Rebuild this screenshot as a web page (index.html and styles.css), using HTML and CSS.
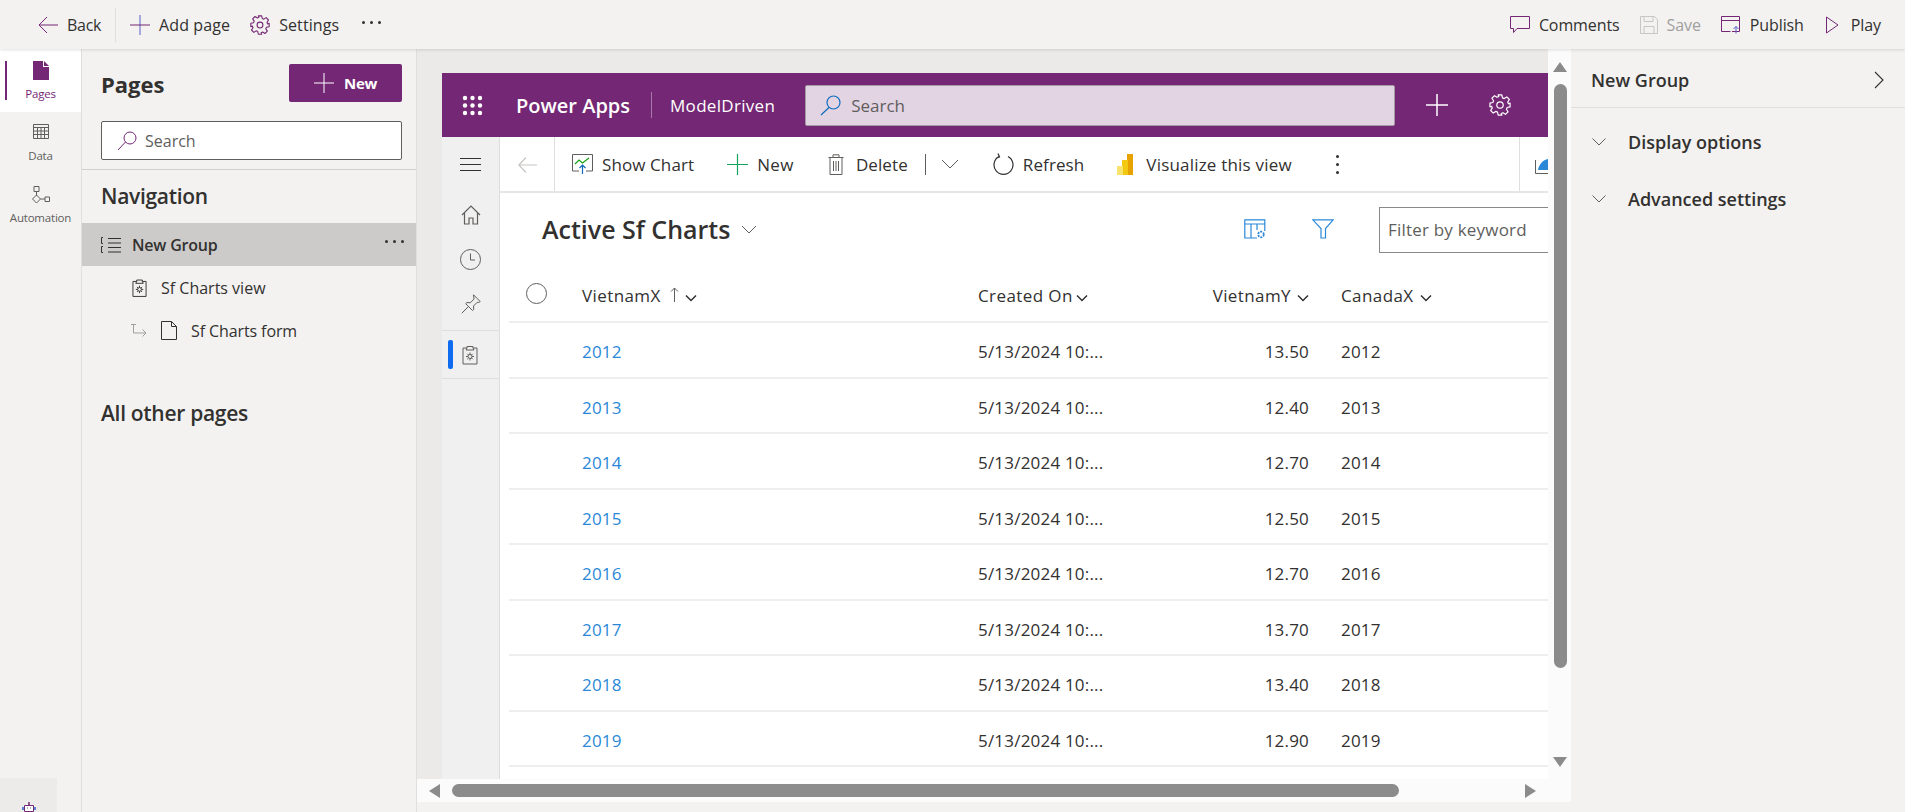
FILE: index.html
```html
<!DOCTYPE html>
<html lang="en">
<head>
    <meta charset="UTF-8">
    <title>Power Apps - ModelDriven</title>
    <link rel="stylesheet" href="styles.css">
</head>
<body>

<header class="topbar">
    <div class="topbar-left">
        <a class="cmd cmd-back"><svg width="20" height="18" viewBox="0 0 20 18"><path d="M9 1 1 9l8 8M1 9h19" class="ic-purple"/></svg>Back</a>
        <span class="top-sep"></span>
        <a class="cmd cmd-add"><svg width="20" height="20" viewBox="0 0 20 20"><path d="M10 0v20" class="ic-blue"/><path d="M0 10h20" class="ic-purple"/></svg>Add page</a>
        <a class="cmd cmd-settings"><svg width="20" height="20" viewBox="0 0 24 24"><use href="#gear"/></svg>Settings</a>
        <span class="top-dots"><i></i><i></i><i></i></span>
    </div>
    <div class="topbar-right">
        <a class="cmd"><svg width="20" height="18" viewBox="0 0 20 18"><path d="M.5.5h19v12H7l-3.500 4v-4h-3z" class="ic-purple"/></svg>Comments</a>
        <a class="cmd cmd-off"><svg width="18" height="18" viewBox="0 0 18 18"><path d="M.5.5h14l3 3v14H.5zM4 .5v5h9v-5M4 17.500v-7h10v7" fill="none" stroke="#c8c6c4"/></svg>Save</a>
        <a class="cmd"><svg width="20" height="18" viewBox="0 0 20 18"><path d="M.5.5h18v15H11M.5.500v15h9M.5 4.500h18" class="ic-purple"/><path d="M15 17.500v-7M12.500 13l2.500-2.500 2.500 2.500" class="ic-blue"/></svg>Publish</a>
        <a class="cmd cmd-play"><svg width="13" height="18" viewBox="0 0 13 18"><path d="M.5 1v16L12 9z" class="ic-purple"/></svg>Play</a>
    </div>
</header>

<svg class="defs" width="0" height="0">
    <symbol id="gear" viewBox="0 0 24 24">
        <circle cx="12" cy="12" r="3.500" fill="none" stroke="currentColor" stroke-width="1.300"/>
        <path d="M10 1h4l.7 3.200 1.900.8 2.800-1.800 2.800 2.800-1.800 2.800.8 1.900L23 10v4l-3.200.7-.8 1.900 1.800 2.800-2.800 2.800-2.800-1.800-1.900.8L14 23h-4l-.7-3.200-1.900-.8-2.800 1.800-2.800-2.800 1.800-2.800-.8-1.900L1 14v-4l3.200-.7.8-1.900-1.800-2.800 2.800-2.800 2.800 1.800 1.900-.8z" fill="none" stroke="currentColor" stroke-width="1.300" stroke-linejoin="round"/>
    </symbol>
    <symbol id="clipboard" viewBox="0 0 16 20">
        <path d="M5 3H1v16h14V3h-4M5 3V1.500h6V3l1 2H4z" fill="none" stroke="currentColor"/>
        <circle cx="8" cy="11.500" r="2" fill="none" stroke="currentColor"/>
        <path d="M8 7.500v2M8 13.500v2M4 11.500h2M10 11.500h2M5.300 8.800l1.200 1.200M9.500 13l1.200 1.200M5.300 14.200 6.500 13M9.500 10l1.200-1.200" stroke="currentColor"/>
    </symbol>
    <symbol id="chev" viewBox="0 0 12 8">
        <path d="M1 1.500 6 6.500l5-5" fill="none" stroke="currentColor" stroke-width="1.500"/>
    </symbol>
</svg>

<div class="main">
    <nav class="rail">
        <div class="rail-top">
            <a class="rail-item rail-active">
                <svg width="16" height="19" viewBox="0 0 16 19"><path d="M0 0h10v6h6v13H0z" fill="#742774"/><path d="M11 0l5 5h-5z" fill="#742774"/></svg>
                <span>Pages</span>
            </a>
            <a class="rail-item">
                <svg width="16" height="15" viewBox="0 0 16 15"><path d="M.5.500h15v14H.5zM.5 3.500h15M.5 7h15M.5 10.500h15M4.500 3.500v11M8 3.500v11M11.500 3.500v11" fill="none" stroke="#605e5c"/></svg>
                <span>Data</span>
            </a>
            <a class="rail-item rail-auto">
                <svg width="19" height="18" viewBox="0 0 19 18"><path d="M3 .5h5v5H3zM14 11h4.500v4.500H14zM5.500 5.500v4M5.500 9l4 4-4 4-4-4zM9.500 13H14" fill="none" stroke="#605e5c"/></svg>
                <span>Automation</span>
            </a>
        </div>
        <div class="rail-bot">
            <svg width="14" height="14" viewBox="0 0 14 14"><path d="M7 0v3" stroke="#742774" stroke-width="1.500"/><path d="M2.500 3.500h9v6h-9z" fill="#fff" stroke="#742774"/><path d="M1 5v3M13 5v3" stroke="#2b5fd9" stroke-width="1.500"/><path d="M5 6h1M8 6h1" stroke="#605e5c"/></svg>
        </div>
    </nav>

    <aside class="panel">
        <div class="panel-head">
            <h2>Pages</h2>
            <button class="btn-new"><svg width="20" height="20" viewBox="0 0 20 20"><path d="M10 0v20M0 10h20" stroke="#fff" fill="none"/></svg>New</button>
        </div>
        <div class="panel-search">
            <svg width="20" height="20" viewBox="0 0 20 20"><circle cx="13" cy="7" r="6" class="ic-purple"/><path d="M8.500 11 1 19" class="ic-purple"/></svg>
            <span>Search</span>
        </div>
        <h3 class="panel-sub">Navigation</h3>
        <div class="tree-group">
            <svg width="20" height="16" viewBox="0 0 20 16"><path d="M7 1.500h13M7 6h13M7 10.500h13M7 15h13" stroke="#323130"/><path d="M2 .5H.5v6H2M2 9.500H.5v6H2" stroke="#323130" fill="none"/></svg>
            <span class="tree-name">New Group</span>
            <span class="tree-dots"><i></i><i></i><i></i></span>
        </div>
        <div class="tree-item tree-view">
            <svg width="15" height="20" viewBox="0 0 16 20" color="#323130"><use href="#clipboard"/></svg>
            <span>Sf Charts view</span>
        </div>
        <div class="tree-item tree-form">
            <svg class="tree-arrow" width="16" height="13" viewBox="0 0 16 13"><path d="M0 .5h5M2.500.5V9H15M11.500 5.500 15 9l-3.500 3.500" stroke="#a19f9d" fill="none"/></svg>
            <svg width="16" height="19" viewBox="0 0 16 19"><path d="M.5.5h10l5 5v13H.5zM10.500.5v5h5" stroke="#323130" fill="none"/></svg>
            <span>Sf Charts form</span>
        </div>
        <h3 class="panel-other">All other pages</h3>
    </aside>

    <section class="canvas">
        <div class="canvas-row">
            <div class="app">
                <div class="app-head">
                    <svg class="waffle" width="21" height="21" viewBox="0 0 21 21" fill="#fff"><circle cx="3" cy="3" r="2.200"/><circle cx="10.500" cy="3" r="2.200"/><circle cx="18" cy="3" r="2.200"/><circle cx="3" cy="10.500" r="2.200"/><circle cx="10.500" cy="10.500" r="2.200"/><circle cx="18" cy="10.500" r="2.200"/><circle cx="3" cy="18" r="2.200"/><circle cx="10.500" cy="18" r="2.200"/><circle cx="18" cy="18" r="2.200"/></svg>
                    <span class="app-name">Power Apps</span>
                    <span class="app-sep"></span>
                    <span class="app-env">ModelDriven</span>
                    <div class="app-search">
                        <svg width="21" height="21" viewBox="0 0 21 21"><circle cx="13.500" cy="7.500" r="6.500" fill="none" stroke="#0f6cbd" stroke-width="1.200"/><path d="M9 12.500 1 20" stroke="#0f6cbd" stroke-width="1.200"/></svg>
                        <span>Search</span>
                    </div>
                    <svg class="app-plus" width="22" height="22" viewBox="0 0 22 22"><path d="M11 0v22M0 11h22" stroke="#fff" stroke-width="1.500"/></svg>
                    <svg class="app-gear" width="22" height="22" viewBox="0 0 24 24" color="#fff"><use href="#gear"/></svg>
                </div>
                <div class="app-body">
                    <div class="sitemap">
                        <div class="sm-burger"><i></i><i></i><i></i></div>
                        <div class="sm-links">
                            <svg width="20" height="20" viewBox="0 0 20 20"><path d="M1 10 10 1l9 9M3.500 8v11H8v-6h4v6h4.500V8" fill="none" stroke="#605e5c" stroke-width="1.200"/></svg>
                            <svg width="21" height="21" viewBox="0 0 21 21"><circle cx="10.500" cy="10.500" r="10" fill="none" stroke="#605e5c"/><path d="M10.500 4.500v6.500H15" fill="none" stroke="#605e5c"/></svg>
                            <svg width="20" height="20" viewBox="0 0 20 20"><path d="M12.500.8l6.700 6.700-1.500 1-1.500-.2-3.700 3.700.3 3.300-1.300 1.200L4.700 9.700 6 8.500l3.300.3L13 5.100l-.2-2zM7.500 12.500 .8 19.200" fill="none" stroke="#605e5c"/></svg>
                        </div>
                        <div class="sm-active">
                            <svg width="16" height="20" viewBox="0 0 16 20" color="#605e5c"><use href="#clipboard"/></svg>
                        </div>
                    </div>
                    <div class="content">
                        <div class="cmdbar">
                            <div class="cmd-backcell"><svg width="19" height="16" viewBox="0 0 19 16"><path d="M8 .5.8 8 8 15.500M.8 8H19" fill="none" stroke="#c8c6c4" stroke-width="1.200"/></svg></div>
                            <div class="cmd-items">
                                <a class="bar-item bar-chart">
                                    <svg width="21" height="20" viewBox="0 0 21 20"><path d="M7 17H.5V.5h20V17H14" fill="none" stroke="#605e5c"/><path d="M3 10l4-4 3.500 3L17 4" fill="none" stroke="#13a10e" stroke-width="1.200"/><path d="M10.500 20v-9M7.500 14l3-3 3 3" fill="none" stroke="#0f6cbd" stroke-width="1.200"/></svg>
                                    Show Chart
                                </a>
                                <a class="bar-item bar-new">
                                    <svg width="21" height="21" viewBox="0 0 21 21"><path d="M10.500 0v21M0 10.500h21" stroke="#13a35c" stroke-width="1.200"/></svg>
                                    New
                                </a>
                                <a class="bar-item bar-del">
                                    <svg width="16" height="21" viewBox="0 0 16 21"><path d="M.5 3.500h15M2 3.500V20.500h12V3.500M5 3.500V.8h6v2.700M5.500 7v10M8 7v10M10.500 7v10" fill="none" stroke="#605e5c"/></svg>
                                    Delete
                                </a>
                                <span class="bar-sep"></span>
                                <svg class="bar-more" width="18" height="10" viewBox="0 0 18 10"><path d="M1 1l8 8 8-8" fill="none" stroke="#605e5c"/></svg>
                                <a class="bar-item bar-refresh">
                                    <svg width="21" height="22" viewBox="0 0 21 22"><path d="M6 3.500a9.500 9.500 0 1 0 9 0M5 .5l1.500 3.500-3.500 1.200" fill="none" stroke="#323130" stroke-width="1.200"/></svg>
                                    Refresh
                                </a>
                                <a class="bar-item bar-pbi">
                                    <svg width="16" height="21" viewBox="0 0 16 21"><rect x="10" width="6" height="21" fill="#e8a200"/><rect x="5" y="6" width="6" height="15" fill="#f2c811"/><rect y="12" width="6" height="9" fill="#f8e36f"/></svg>
                                    Visualize this view
                                </a>
                                <span class="bar-dots"><i></i><i></i><i></i></span>
                            </div>
                            <div class="cmd-end"><svg width="13" height="16" viewBox="0 0 13 16"><path d="M.5 2v13.500H13" fill="none" stroke="#605e5c"/><path d="M3 12C4 6 8 2 13 1v11z" fill="#2b88d8"/></svg></div>
                        </div>
                        <div class="view-head">
                            <div class="view-title">Active Sf Charts<svg width="16" height="9" viewBox="0 0 16 9"><path d="M1 1l7 7 7-7" fill="none" stroke="#605e5c"/></svg></div>
                            <svg class="view-cols" width="22" height="20" viewBox="0 0 22 20"><path d="M13 19H.8V.8h20V12M.8 5h20M7 5v14M13 5v6" fill="none" stroke="#2b88d8" stroke-width="1.200"/><circle cx="17" cy="15.500" r="2.800" fill="none" stroke="#2b88d8" stroke-width="1.800" stroke-dasharray="2 1"/></svg>
                            <svg class="view-filter" width="22" height="20" viewBox="0 0 22 20"><path d="M.8.8h20.400L13.500 9.500V19h-4.500V9.500z" fill="none" stroke="#2b88d8" stroke-width="1.200"/></svg>
                            <div class="view-filterbox">Filter by keyword</div>
                        </div>
                        <div class="grid-head">
                            <span class="check"></span>
                            <span class="col-x">VietnamX<svg class="sort" width="9" height="15" viewBox="0 0 9 15"><path d="M4.500 15V1M1 4.500 4.500 1 8 4.500" fill="none" stroke="#605e5c"/></svg><svg class="cv" width="12" height="8"><use href="#chev"/></svg></span>
                            <span class="col-date">Created On<svg class="cv" width="12" height="8"><use href="#chev"/></svg></span>
                            <span class="col-y">VietnamY<svg class="cv" width="12" height="8"><use href="#chev"/></svg></span>
                            <span class="col-c">CanadaX<svg class="cv" width="12" height="8"><use href="#chev"/></svg></span>
                        </div>
                        <div class="grid-row"><a class="col-x">2012</a><span class="col-date">5/13/2024 10:...</span><span class="col-y">13.50</span><span class="col-c">2012</span></div>
                        <div class="grid-row"><a class="col-x">2013</a><span class="col-date">5/13/2024 10:...</span><span class="col-y">12.40</span><span class="col-c">2013</span></div>
                        <div class="grid-row"><a class="col-x">2014</a><span class="col-date">5/13/2024 10:...</span><span class="col-y">12.70</span><span class="col-c">2014</span></div>
                        <div class="grid-row"><a class="col-x">2015</a><span class="col-date">5/13/2024 10:...</span><span class="col-y">12.50</span><span class="col-c">2015</span></div>
                        <div class="grid-row"><a class="col-x">2016</a><span class="col-date">5/13/2024 10:...</span><span class="col-y">12.70</span><span class="col-c">2016</span></div>
                        <div class="grid-row"><a class="col-x">2017</a><span class="col-date">5/13/2024 10:...</span><span class="col-y">13.70</span><span class="col-c">2017</span></div>
                        <div class="grid-row"><a class="col-x">2018</a><span class="col-date">5/13/2024 10:...</span><span class="col-y">13.40</span><span class="col-c">2018</span></div>
                        <div class="grid-row"><a class="col-x">2019</a><span class="col-date">5/13/2024 10:...</span><span class="col-y">12.90</span><span class="col-c">2019</span></div>
                    </div>
                </div>
            </div>
            <div class="vscroll">
                <span class="arrow-up"></span>
                <span class="vthumb"></span>
                <span class="arrow-down"></span>
            </div>
        </div>
        <div class="hscroll">
            <span class="arrow-left"></span>
            <span class="hthumb"></span>
            <span class="arrow-right"></span>
        </div>
    </section>

    <aside class="props">
        <div class="props-head">
            <span>New Group</span>
            <svg width="10" height="18" viewBox="0 0 10 18"><path d="M1 1l8 8-8 8" fill="none" stroke="#323130" stroke-width="1.100"/></svg>
        </div>
        <div class="props-sec"><svg width="14" height="8" viewBox="0 0 14 8"><path d="M.5.5 7 7 13.500.5" fill="none" stroke="#605e5c"/></svg>Display options</div>
        <div class="props-sec"><svg width="14" height="8" viewBox="0 0 14 8"><path d="M.5.5 7 7 13.500.5" fill="none" stroke="#605e5c"/></svg>Advanced settings</div>
    </aside>
</div>

</body>
</html>
```

FILE: styles.css
```css
* {
    box-sizing: border-box;
}
html, body {
    height: 100%;
}
body {
    margin: 0;
    height: 812px;
    overflow: hidden;
    display: flex;
    flex-direction: column;
    font-family: "Open Sans", "Noto Sans", sans-serif;
    font-size: 16px;
    color: #323130;
    background: #f3f2f1;
}
.defs {
    position: absolute;
}
.ic-purple {
    fill: none;
    stroke: #742774;
}
.ic-blue {
    fill: none;
    stroke: #5b5fc7;
}

/* top bar */
.topbar {
    height: 49px;
    flex: none;
    display: flex;
    justify-content: space-between;
    align-items: center;
    background: #f3f2f1;
    box-shadow: 0 1px 3px rgba(0, 0, 0, 0.12);
    position: relative;
    z-index: 2;
}
.topbar-left, .topbar-right, .cmd {
    display: flex;
    align-items: center;
}
.topbar-left {
    padding-left: 38px;
}
.topbar-right {
    padding-right: 24px;
    gap: 20px;
}
.cmd {
    gap: 9px;
    letter-spacing: -0.1px;
}
.cmd-off {
    color: #a19f9d;
}
.cmd-back {
    gap: 9px;
    letter-spacing: -0.3px;
}
.cmd-play {
    gap: 12px;
    margin-left: 2px;
}
.top-sep {
    width: 1px;
    height: 34px;
    background: #e1dfdd;
    margin: 0 14px;
}
.cmd-add {
    letter-spacing: 0.1px;
}
.cmd-settings {
    margin-left: 20px;
    color: #323130;
    letter-spacing: 0.1px;
}
.cmd-settings svg {
    color: #742774;
}
.top-dots {
    display: flex;
    gap: 5px;
    margin-left: 23px;
    margin-top: -4px;
}
.top-dots i, .tree-dots i {
    width: 3px;
    height: 3px;
    border-radius: 50%;
    background: #323130;
}

.main {
    flex: 1;
    display: flex;
    min-height: 0;
}

/* left rail */
.rail {
    width: 82px;
    flex: none;
    border-right: 1px solid #e1dfdd;
    display: flex;
    flex-direction: column;
    justify-content: space-between;
}
.rail-top {
    display: flex;
    flex-direction: column;
}
.rail-item {
    height: 63px;
    padding-top: 12px;
    display: flex;
    flex-direction: column;
    align-items: center;
    gap: 6px;
    font-size: 11.5px;
    color: #605e5c;
    letter-spacing: -0.2px;
}
.rail-item + .rail-item {
    height: 62px;
    gap: 9px;
}
.rail-item.rail-auto {
    gap: 6px;
}
.rail-active {
    background: #fff;
    color: #742774;
    position: relative;
}
.rail-active::before {
    content: "";
    position: absolute;
    left: 5px;
    top: 12px;
    width: 2px;
    height: 39px;
    background: #742774;
}
.rail-bot {
    width: 57px;
    height: 34px;
    background: #edebe9;
    text-align: center;
    padding-top: 21px;
}

/* pages panel */
.panel {
    width: 335px;
    flex: none;
    border-right: 1px solid #e1dfdd;
}
.panel-head {
    display: flex;
    justify-content: space-between;
    align-items: center;
    padding: 15px 14px 0 19px;
}
.panel-head h2 {
    margin: 2px 0 0;
    font-size: 22px;
    font-weight: 700;
}
.btn-new {
    width: 113px;
    height: 38px;
    display: flex;
    align-items: center;
    justify-content: center;
    gap: 10px;
    border: 0;
    border-radius: 2px;
    background: #742774;
    color: #fff;
    font: 700 15px "Open Sans", sans-serif;
    letter-spacing: -0.3px;
}
.panel-search {
    margin: 19px 14px 0 19px;
    height: 39px;
    display: flex;
    align-items: center;
    gap: 8px;
    padding-left: 15px;
    background: #fff;
    border: 1px solid #605e5c;
    border-radius: 2px;
    color: #605e5c;
}
.panel-sub {
    margin: 9px 0 0;
    padding: 12px 19px 0;
    height: 54px;
    border-top: 1px solid #d2d0ce;
    font-size: 21px;
    font-weight: 600;
    letter-spacing: -0.3px;
}
.tree-group {
    height: 43px;
    display: flex;
    align-items: center;
    padding: 0 12px 0 19px;
    background: #cdcbc9;
}
.tree-name {
    flex: 1;
    margin-left: 11px;
    font-weight: 600;
    letter-spacing: -0.2px;
}
.tree-dots {
    display: flex;
    gap: 5px;
    margin-top: -6px;
}
.tree-item {
    height: 43px;
    display: flex;
    align-items: center;
}
.tree-view {
    padding-left: 50px;
    gap: 14px;
}
.tree-form {
    padding-left: 49px;
    gap: 14px;
    letter-spacing: -0.1px;
}
.panel-other {
    margin: 47px 0 0;
    padding-left: 19px;
    font-size: 21px;
    font-weight: 600;
    letter-spacing: -0.3px;
}

/* canvas */
.canvas {
    flex: 1;
    min-width: 0;
    display: flex;
    flex-direction: column;
}
.canvas-row {
    height: 730px;
    display: flex;
    padding-left: 25px;
    background: #ebeae8;
}
.app {
    flex: 1;
    min-width: 0;
    margin-top: 24px;
    display: flex;
    flex-direction: column;
    background: #fff;
    overflow: hidden;
}
.vscroll {
    width: 23px;
    flex: none;
    background: #fbfbfb;
    display: flex;
    flex-direction: column;
    align-items: center;
    padding: 13px 0 12px 1px;
}
.vthumb {
    width: 13px;
    height: 584px;
    margin-top: 12px;
    border-radius: 7px;
    background: #8b8b8b;
}
.arrow-up, .arrow-down {
    width: 0;
    height: 0;
    border-left: 7px solid transparent;
    border-right: 7px solid transparent;
}
.arrow-up {
    border-bottom: 10px solid #8b8b8b;
}
.arrow-down {
    margin-top: auto;
    border-top: 10px solid #8b8b8b;
}
.hscroll {
    height: 23px;
    flex: none;
    display: flex;
    align-items: center;
    padding: 0 35px 0 12px;
    background: #fbfbfb;
}
.hthumb {
    width: 947px;
    height: 13px;
    margin-left: 12px;
    border-radius: 7px;
    background: #8b8b8b;
}
.arrow-left, .arrow-right {
    width: 0;
    height: 0;
    border-top: 7px solid transparent;
    border-bottom: 7px solid transparent;
}
.arrow-left {
    border-right: 11px solid #8b8b8b;
}
.arrow-right {
    margin-left: auto;
    border-left: 11px solid #8b8b8b;
}

/* app header */
.app-head {
    height: 64px;
    flex: none;
    display: flex;
    align-items: center;
    background: #742774;
    color: #fff;
    padding-left: 20px;
}
.app-name {
    margin-left: 33px;
    font-size: 20px;
    font-weight: 600;
}
.app-sep {
    width: 1px;
    height: 26px;
    margin: 0 18px 0 21px;
    background: #a878a8;
}
.app-env {
    font-size: 17px;
    letter-spacing: 0.3px;
}
.app-search {
    width: 590px;
    height: 41px;
    margin-left: 30px;
    display: flex;
    align-items: center;
    gap: 10px;
    padding-left: 14px;
    background: #e3d4e3;
    border: 1px solid #a39aa3;
    border-radius: 2px;
    color: #605e5c;
    font-size: 17px;
}
.app-plus {
    margin-left: 31px;
}
.app-gear {
    margin-left: 41px;
}

.app-body {
    flex: 1;
    display: flex;
    min-height: 0;
}
.sitemap {
    width: 58px;
    flex: none;
    background: #f0f0f0;
    border-right: 1px solid #dedede;
}
.sm-burger {
    height: 56px;
    padding: 21px 0 0 18px;
}
.sm-burger i {
    display: block;
    width: 21px;
    height: 1px;
    margin-bottom: 5px;
    background: #323130;
}
.sm-links {
    display: flex;
    flex-direction: column;
    align-items: center;
    gap: 24px;
    height: 138px;
    padding: 12px 0 0;
    border-bottom: 1px solid #dedede;
}
.sm-active {
    height: 48px;
    position: relative;
    border-bottom: 1px solid #dedede;
    padding: 14px 0 0 20px;
}
.sm-active::before {
    content: "";
    position: absolute;
    left: 6px;
    top: 9px;
    width: 5px;
    height: 29px;
    border-radius: 2px;
    background: #0f6cf0;
}
.content {
    flex: 1;
    min-width: 0;
}

/* command bar */
.cmdbar {
    height: 56px;
    display: flex;
    align-items: center;
    border-bottom: 2px solid #e6e6e6;
}
.cmd-backcell {
    width: 55px;
    height: 100%;
    flex: none;
    padding: 19px 0 0 18px;
    border-right: 1px solid #e1dfdd;
}
.cmd-items {
    flex: 1;
    display: flex;
    align-items: center;
    padding-left: 17px;
    font-size: 17px;
    letter-spacing: 0.1px;
    color: #323130;
}
.bar-item {
    display: flex;
    align-items: center;
    gap: 9px;
}
.bar-new {
    margin-left: 33px;
    letter-spacing: 0.4px;
}
.bar-del {
    margin-left: 34px;
    gap: 12px;
}
.bar-sep {
    width: 1px;
    height: 21px;
    margin-left: 17px;
    background: #605e5c;
}
.bar-more {
    margin-left: 15px;
}
.bar-refresh {
    margin-left: 34px;
}
.bar-pbi {
    margin-left: 33px;
    gap: 13px;
    letter-spacing: 0.2px;
}
.bar-dots {
    display: flex;
    flex-direction: column;
    gap: 5px;
    margin-left: 44px;
}
.bar-dots i {
    width: 3px;
    height: 3px;
    border-radius: 50%;
    background: #323130;
}
.cmd-end {
    width: 29px;
    height: 100%;
    flex: none;
    padding: 20px 0 0 15px;
    border-left: 1px solid #e1dfdd;
    overflow: hidden;
}

/* view header */
.view-head {
    height: 72px;
    display: flex;
    align-items: center;
    padding-left: 42px;
}
.view-title {
    width: 702px;
    font-size: 25px;
    font-weight: 600;
    display: flex;
    align-items: center;
    gap: 11px;
}
.view-filter {
    margin-left: 46px;
}
.view-filterbox {
    flex: 1;
    height: 46px;
    margin: 2px 0 0 45px;
    padding: 10px 0 0 8px;
    border: 1px solid #8a8886;
    border-right: 0;
    color: #605e5c;
    font-size: 17px;
    letter-spacing: 0.2px;
    white-space: nowrap;
}

/* grid */
.grid-head, .grid-row {
    display: grid;
    grid-template-columns: 73px 396px 235px 96px 1fr;
    align-items: center;
    margin-left: 9px;
    padding-top: 4px;
    border-bottom: 2px solid #eeeeee;
    font-size: 17px;
    letter-spacing: 0.2px;
}
.grid-head {
    height: 58px;
    font-weight: 500;
    letter-spacing: 0.4px;
}
.grid-row {
    height: 55.5px;
}
.check {
    width: 21px;
    height: 21px;
    margin: -4px 0 0 17px;
    border: 1px solid #605e5c;
    border-radius: 50%;
}
.grid-row .col-x {
    grid-column: 2;
    color: #2b88d8;
}
.col-y {
    margin-left: -20px;
    text-align: right;
    white-space: nowrap;
}
.col-c {
    padding-left: 32px;
}
.sort {
    margin-left: 9px;
}
.cv {
    margin-left: 6px;
    color: #323130;
}
.col-date .cv {
    margin-left: 3px;
}

/* right panel */
.props {
    width: 334px;
    flex: none;
}
.props-head {
    height: 59px;
    display: flex;
    justify-content: space-between;
    align-items: center;
    padding: 3px 21px 0 20px;
    border-bottom: 1px solid #e1dfdd;
    font-weight: 600;
    font-size: 18px;
}
.props-sec {
    height: 57px;
    display: flex;
    align-items: center;
    gap: 22px;
    padding: 0 0 0 21px;
    font-weight: 600;
    font-size: 18px;
}
.props-head + .props-sec {
    margin-top: 5px;
}
```
